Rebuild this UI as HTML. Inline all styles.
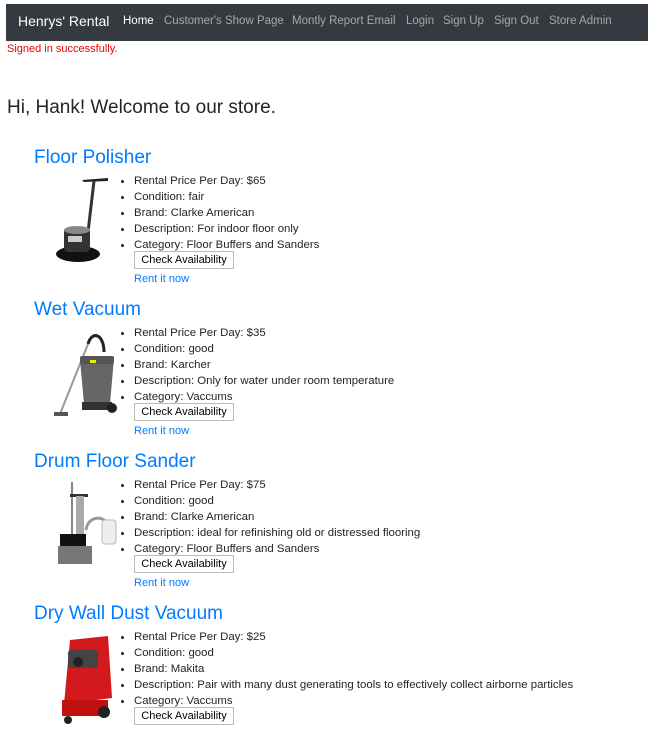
<!DOCTYPE html>
<html><head><meta charset="utf-8"><style>
*{margin:0;padding:0;box-sizing:border-box}
body{width:648px;height:725px;overflow:hidden;background:#fff;font-family:"Liberation Sans",sans-serif;color:#212529;position:relative}
.nav{position:absolute;left:6px;top:4px;width:642px;height:37px;background:#343a40}
.nav span{position:absolute;top:11px;font-size:11.5px;color:rgba(255,255,255,.55);white-space:nowrap}
.nav .brand{left:12px;top:9px;font-size:14px;color:#fff}
.flash{position:absolute;left:7px;top:43px;font-size:11px;color:#e00;}
h1{position:absolute;left:7px;top:97px;font-size:19px;font-weight:400;color:#212529}
.item{position:absolute;left:0;width:648px;height:152px}
.item h2{position:absolute;left:34px;top:2px;font-size:19px;font-weight:400;color:#007bff;line-height:24px;white-space:nowrap}
.item svg{position:absolute;left:48px;top:28px}
.item ul{position:absolute;left:134px;top:29px;list-style:none;font-size:11.4px;line-height:16px;white-space:nowrap}
.item li:before{content:"";position:absolute;left:-13px;margin-top:7px;width:3px;height:3px;border-radius:50%;background:#222}
.btn{position:absolute;left:134px;top:107px;width:100px;height:18px;border:1px solid #bbb;font-size:11px;line-height:16px;text-align:center;color:#000;background:#fff}
.rent{position:absolute;left:134px;top:127px;font-size:11px;line-height:16px;color:#007bff}
</style></head><body>
<div class="nav">
<span class="brand">Henrys' Rental</span>
<span style="left:117px;color:#fff">Home</span>
<span style="left:158px">Customer's Show Page</span>
<span style="left:286px">Montly Report Email</span>
<span style="left:400px">Login</span>
<span style="left:437px">Sign Up</span>
<span style="left:488px">Sign Out</span>
<span style="left:543px">Store Admin</span>
</div>
<div class="flash">Signed in successfully.</div>
<h1>Hi, Hank! Welcome to our store.</h1>

<div class="item" style="top:144px">
<h2>Floor Polisher</h2>
<svg width="70" height="100" viewBox="0 0 70 100"><path d="M34 8 L60 6 L60 9 L36 10Z" fill="#222"/><path d="M46 9 L40 60" stroke="#333" stroke-width="3"/><ellipse cx="30" cy="82" rx="22" ry="8" fill="#111"/><rect x="16" y="56" width="26" height="24" rx="4" fill="#333"/><ellipse cx="29" cy="58" rx="13" ry="4" fill="#888"/><rect x="20" y="64" width="14" height="6" fill="#ccc"/></svg>
<ul><li>Rental Price Per Day: $65</li><li>Condition: fair</li><li>Brand: Clarke American</li><li>Description: For indoor floor only</li><li>Category: Floor Buffers and Sanders</li></ul>
<div class="btn">Check Availability</div><div class="rent">Rent it now</div>
</div>

<div class="item" style="top:296px">
<h2>Wet Vacuum</h2>
<svg width="70" height="100" viewBox="0 0 70 100"><path d="M56 28 C56 10 44 6 40 20" stroke="#222" stroke-width="3" fill="none"/><path d="M40 20 L12 90" stroke="#999" stroke-width="2"/><rect x="6" y="88" width="14" height="4" fill="#555"/><path d="M32 36 L66 34 L62 80 L36 80Z" fill="#666"/><rect x="32" y="32" width="34" height="8" rx="2" fill="#555"/><rect x="42" y="36" width="6" height="3" fill="#ee0"/><rect x="34" y="78" width="30" height="8" fill="#333"/><circle cx="64" cy="84" r="5" fill="#222"/></svg>
<ul><li>Rental Price Per Day: $35</li><li>Condition: good</li><li>Brand: Karcher</li><li>Description: Only for water under room temperature</li><li>Category: Vaccums</li></ul>
<div class="btn">Check Availability</div><div class="rent">Rent it now</div>
</div>

<div class="item" style="top:448px">
<h2>Drum Floor Sander</h2>
<svg width="70" height="100" viewBox="0 0 70 100"><path d="M24 6 L24 60" stroke="#888" stroke-width="2"/><rect x="22" y="18" width="18" height="3" fill="#333"/><rect x="28" y="20" width="8" height="50" fill="#aaa"/><path d="M38 54 C40 40 54 40 58 46" stroke="#999" stroke-width="3" fill="none"/><rect x="54" y="44" width="14" height="24" rx="3" fill="#eee" stroke="#bbb"/><rect x="12" y="58" width="26" height="12" fill="#111"/><rect x="10" y="70" width="34" height="18" fill="#777"/></svg>
<ul><li>Rental Price Per Day: $75</li><li>Condition: good</li><li>Brand: Clarke American</li><li>Description: ideal for refinishing old or distressed flooring</li><li>Category: Floor Buffers and Sanders</li></ul>
<div class="btn">Check Availability</div><div class="rent">Rent it now</div>
</div>

<div class="item" style="top:600px">
<h2>Dry Wall Dust Vacuum</h2>
<svg width="70" height="100" viewBox="0 0 70 100"><path d="M22 12 L60 8 L64 70 L16 76 Z" fill="#d4191c"/><rect x="20" y="22" width="30" height="18" rx="3" fill="#444"/><circle cx="30" cy="34" r="5" fill="#222"/><rect x="14" y="72" width="46" height="16" fill="#c01010"/><circle cx="20" cy="92" r="4" fill="#222"/><circle cx="56" cy="84" r="6" fill="#222"/></svg>
<ul><li>Rental Price Per Day: $25</li><li>Condition: good</li><li>Brand: Makita</li><li>Description: Pair with many dust generating tools to effectively collect airborne particles</li><li>Category: Vaccums</li></ul>
<div class="btn">Check Availability</div>
</div>
</body></html>
